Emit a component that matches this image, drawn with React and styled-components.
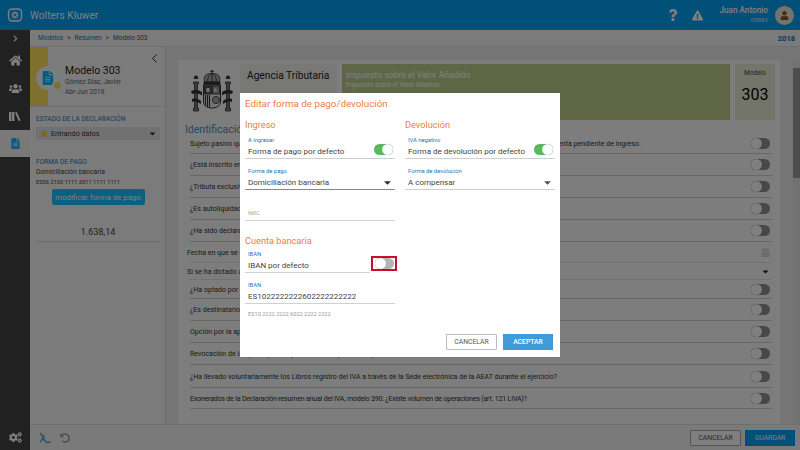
import React from 'react'
import styled, {createGlobalStyle} from 'styled-components'
import {ChevronLeft} from 'lucide-react'
import {
  FaHome,
  FaUsers,
  FaQuestion,
  FaExclamationTriangle,
  FaCogs,
  FaUser,
  FaFileAlt,
  FaUndoAlt,
  FaCalendarAlt,
  FaCaretDown,
  FaChevronRight
} from 'react-icons/fa'

const GlobalStyle = createGlobalStyle`
  html, body {
    margin: 0;
    padding: 0;
    background: #f4f4f4;
    overflow: hidden;
  }
  * {
    box-sizing: border-box;
  }
`

const rows = [
  {height: 20, text: 'Sujeto pasivo que tributa exclusivamente en territorio foral y con resultado a ingresar en el ejercicio y mantiene una cuenta pendiente de ingreso.'},
  {height: 21.5, text: '¿Está inscrito en el Registro de devolución mensual (art. 30 RIVA)?'},
  {height: 22.5, text: '¿Tributa exclusivamente en régimen simplificado?'},
  {height: 22, text: '¿Es autoliquidación conjunta de grupo de entidades?'},
  {height: 22, text: '¿Ha sido declarado en concurso de acreedores en este período?'},
  {height: 21, text: 'Fecha en que se dictó el auto de declaración de concurso', kind: 'date', plain: true},
  {height: 17, text: 'Si se ha dictado auto de declaración de concurso en este período', kind: 'select', plain: true},
  {height: 19, text: '¿Ha optado por el régimen especial del criterio de caja?'},
  {height: 22, text: '¿Es destinatario de operaciones a las que se aplique el criterio de caja?'},
  {height: 22, text: 'Opción por la aplicación de la prorrata especial'},
  {height: 22, text: 'Revocación de la opción por la aplicación de la prorrata especial'},
  {height: 23, text: '¿Ha llevado voluntariamente los Libros registro del IVA a través de la Sede electrónica de la AEAT durante el ejercicio?'},
  {height: 21, tight: true, text: 'Exonerados de la Declaración-resumen anual del IVA, modelo 390: ¿Existe volumen de operaciones (art. 121 LIVA)?'}
]

const Logo = () => (
  <svg width="16" height="16" viewBox="0 0 16 16" fill="none">
    <rect x="1.5" y="2" width="13" height="12" rx="3.5" stroke="#fff" strokeWidth="1.4" />
    <circle cx="8" cy="8" r="3.4" fill="#cfe6f5" />
    <path d="M6.6 6.6l2.8 2.8M9.4 6.6l-2.8 2.8" stroke="#00a4fe" strokeWidth="1" />
  </svg>
)

const LibraryIcon = () => (
  <svg width="12" height="10" viewBox="0 0 12 10" fill="#fff">
    <rect x="0" y="1" width="2.4" height="9" />
    <rect x="3" y="1" width="2.4" height="9" />
    <path d="M6 1.6L7.8 1l3.8 8.4-2 .6z" />
  </svg>
)

const TaxIcon = () => (
  <svg width="14" height="12" viewBox="0 0 14 12" fill="none" stroke="#58a8d8" strokeWidth="1.6">
    <path d="M2.5 1l5 8.5" />
    <path d="M7.5 9.5c1.2 1.2 3.4 1.2 5 0" />
    <path d="M6.5 3.5L2.5 10" />
  </svg>
)

const Crest = () => (
  <svg width="44" height="46" viewBox="0 0 44 46" fill="none" stroke="#333" strokeWidth="0.8">
    <path d="M22 1v4M20.4 2.4h3.2" strokeWidth="1.1" />
    <path d="M14.5 13c-2-8 4-8.500 7.500-8.500s9.500.5 7.500 8.500z" fill="#aaa" />
    <path d="M18 13c-1-4 1-7 4-8.500 3 1.500 5 4.500 4 8.500M22 4.500V13" />
    <rect x="14" y="13" width="16" height="2.4" fill="#333" />
    <path d="M13.500 16h17v17c0 8-17 8-17 0z" fill="#e8e8e8" strokeWidth="1" />
    <rect x="14.500" y="17" width="7" height="8" fill="#555" />
    <rect x="22.500" y="17" width="7" height="8" fill="#999" />
    <path d="M16.500 19h3v4h-3zM24.500 19l3 2-3 2z" fill="#e8e8e8" stroke="none" />
    <path d="M15.500 26v10M17.500 26v12M19.500 26v12" strokeWidth="1.1" />
    <circle cx="26" cy="31" r="3.600" fill="#aaa" />
    <path d="M3.500 13h5v2h-1v24h1v3h-5v-3h1V15h-1zM35.500 13h5v2h-1v24h1v3h-5v-3h1V15h-1z" fill="#777" />
    <path d="M4 9.500h4l-1-2.500H5zM36 9.500h4l-1-2.500h-2z" fill="#333" />
    <path d="M1 22c4-2 8-1 11 1v3.500c-3-2-7-3-10-1.500zM43 22c-4-2-8-1-11 1v3.500c3-2 7-3 10-1.500z" fill="#333" stroke="none" />
    <path d="M2 30c3-1 7 0 9 2v3c-3-2-6-3-9-2zM42 30c-3-1-7 0-9 2v3c3-2 6-3 9-2z" fill="#333" stroke="none" />
  </svg>
)

const App = () => (
  <Page>
    <GlobalStyle />
    <Header>
      <Brand>
        <Logo />
        <BrandName>Wolters Kluwer</BrandName>
      </Brand>
      <HeaderTools>
        <HeaderIcon><FaQuestion size={12} /></HeaderIcon>
        <HeaderIcon><FaExclamationTriangle size={11} /></HeaderIcon>
        <UserBlock>
          <UserName>Juan Antonio</UserName>
          <UserCompany>0388V</UserCompany>
        </UserBlock>
        <Avatar><FaUser size={9} /></Avatar>
      </HeaderTools>
    </Header>

    <Body>
      <Rail>
        <RailItem $small><FaChevronRight size={7} /></RailItem>
        <RailItem><FaHome size={13} /></RailItem>
        <RailItem><FaUsers size={13} /></RailItem>
        <RailItem><LibraryIcon /></RailItem>
        <RailItem $active><FaFileAlt size={11} /></RailItem>
        <RailBottom><FaCogs size={13} /></RailBottom>
      </Rail>

      <Workspace>
        <Breadcrumb>
          <Crumbs>
            <Crumb>Modelos</Crumb><Sep>&gt;</Sep>
            <Crumb>Resumen</Crumb><Sep>&gt;</Sep>
            <CrumbCurrent>Modelo 303</CrumbCurrent>
          </Crumbs>
          <Year>2018</Year>
        </Breadcrumb>

        <Content>
          <SidePanel>
            <SideHead>
              <GoldStripe />
              <ModelBadge>
                <FaFileAlt size={14} color="#12b4ff" />
                <BadgeDot />
              </ModelBadge>
              <SideTitle>
                <ModelName>Modelo 303</ModelName>
                <ModelMeta>Gómez Díaz, Javier</ModelMeta>
                <ModelMeta>Abr-Jun 2018</ModelMeta>
              </SideTitle>
              <Collapse><ChevronLeft size={15} strokeWidth={1.6} /></Collapse>
            </SideHead>

            <SideSection>
              <SideLabel>ESTADO DE LA DECLARACIÓN</SideLabel>
              <StateSelect>
                <StateDot />
                <StateText>Entrando datos</StateText>
                <FaCaretDown size={9} color="#333" />
              </StateSelect>
            </SideSection>

            <PaySection>
              <SideLabel>FORMA DE PAGO</SideLabel>
              <PayText>Domiciliación bancaria</PayText>
              <PayText $small>ES56 2100 1111 3011 1111 1111</PayText>
              <PayButton>modificar forma de pago</PayButton>
              <Amount>1.638,14</Amount>
            </PaySection>
          </SidePanel>

          <MainColumn>
            <Card>
              <Banner>
                <CrestBox><Crest /></CrestBox>
                <AgencyBox>Agencia Tributaria</AgencyBox>
                <TaxBox>
                  <TaxTitle>Impuesto sobre el Valor Añadido</TaxTitle>
                  <TaxSub>Impuesto sobre el Valor Añadido</TaxSub>
                </TaxBox>
                <ModelBox>
                  <ModelBoxLabel>Modelo</ModelBoxLabel>
                  <ModelBoxNumber>303</ModelBoxNumber>
                </ModelBox>
              </Banner>

              <SectionTitle>Identificación</SectionTitle>
              <RowList>
                {rows.map(row => (
                  <Row key={row.text} $height={row.height} $plain={row.plain}>
                    <RowText $plain={row.plain} $tight={row.tight}>{row.text}</RowText>
                    {row.kind === 'date' && <FaCalendarAlt size={9} color="#d0d0d0" />}
                    {row.kind === 'select' && <FaCaretDown size={9} color="#222" />}
                    {!row.kind && <Toggle $tone="page" />}
                  </Row>
                ))}
              </RowList>
            </Card>
            <Scrollbar>
              <ScrollThumb />
            </Scrollbar>
          </MainColumn>
        </Content>

        <Footer>
          <FooterIcons>
            <TaxIcon />
            <FaUndoAlt size={10} color="#a0a0a0" />
          </FooterIcons>
          <FooterButtons>
            <GhostButton $page>CANCELAR</GhostButton>
            <SaveButton>GUARDAR</SaveButton>
          </FooterButtons>
        </Footer>
      </Workspace>
    </Body>

    <Overlay>
      <Modal>
        <ModalTitle>Editar forma de pago/devolución</ModalTitle>
        <ModalColumns>
          <ModalColumn>
            <GroupTitle>Ingreso</GroupTitle>
            <Field $gap={6}>
              <FieldLabel>A ingresar</FieldLabel>
              <FieldValue>
                <span>Forma de pago por defecto</span>
                <Toggle $on $lift />
              </FieldValue>
            </Field>
            <Field>
              <FieldLabel>Forma de pago</FieldLabel>
              <FieldValue $strong>
                <span>Domiciliación bancaria</span>
                <FaCaretDown size={11} color="#333" />
              </FieldValue>
            </Field>
            <Field $gap={15.5}>
              <FieldValue $muted>
                <span>NRC</span>
              </FieldValue>
            </Field>
            <GroupTitle $second>Cuenta bancaria</GroupTitle>
            <Field $gap={4.5}>
              <FieldLabel>IBAN</FieldLabel>
              <FieldValue $short>
                <span>IBAN por defecto</span>
                <Highlight><Toggle /></Highlight>
              </FieldValue>
            </Field>
            <Field>
              <FieldLabel>IBAN</FieldLabel>
              <FieldValue>
                <span>ES1022222222602222222222</span>
              </FieldValue>
            </Field>
            <Hint>ES10 2222 2222 6022 2222 2222</Hint>
          </ModalColumn>

          <ModalColumn>
            <GroupTitle>Devolución</GroupTitle>
            <Field $gap={6}>
              <FieldLabel>IVA negativo</FieldLabel>
              <FieldValue>
                <span>Forma de devolución por defecto</span>
                <Toggle $on $lift />
              </FieldValue>
            </Field>
            <Field>
              <FieldLabel>Forma de devolución</FieldLabel>
              <FieldValue>
                <span>A compensar</span>
                <FaCaretDown size={11} color="#555" />
              </FieldValue>
            </Field>
          </ModalColumn>
        </ModalColumns>
        <ModalActions>
          <GhostButton>CANCELAR</GhostButton>
          <AcceptButton>ACEPTAR</AcceptButton>
        </ModalActions>
      </Modal>
    </Overlay>
  </Page>
)

export default App

const Page = styled.div`
  position: relative;
  display: flex;
  flex-direction: column;
  width: 800px;
  height: 450px;
  overflow: hidden;
  font-family: Roboto, "Noto Sans", "Liberation Sans", sans-serif;
  color: #333;
`

const Header = styled.header`
  display: flex;
  align-items: center;
  justify-content: space-between;
  flex: 0 0 30px;
  padding: 0 6px 0 7px;
  background: #00a0f4;
  color: #fff;
`

const Brand = styled.div`
  display: flex;
  align-items: center;
  gap: 7px;
`

const BrandName = styled.span`
  font-size: 10px;
  letter-spacing: 0.1px;
`

const HeaderTools = styled.div`
  display: flex;
  align-items: center;
`

const HeaderIcon = styled.span`
  display: flex;
  width: 25px;
  justify-content: center;
`

const UserBlock = styled.div`
  display: flex;
  flex-direction: column;
  align-items: flex-end;
  width: 50px;
  margin: 0 7px 0 8px;
  line-height: 9px;
  white-space: nowrap;
`

const UserName = styled.span`
  font-size: 8.2px;
  font-weight: 500;
`

const UserCompany = styled.span`
  font-size: 6px;
  opacity: 0.8;
`

const Avatar = styled.span`
  display: flex;
  align-items: center;
  justify-content: center;
  width: 19px;
  height: 19px;
  border-radius: 50%;
  background: #f0e4d8;
  color: #7a5a3a;
`

const Body = styled.div`
  display: flex;
  flex: 1;
  min-height: 0;
`

const Rail = styled.nav`
  display: flex;
  flex-direction: column;
  flex: 0 0 30px;
  background: #424242;
  color: #fff;
`

const RailItem = styled.div`
  display: flex;
  align-items: center;
  justify-content: center;
  height: ${props => (props.$small ? '17px' : '27.5px')};
  background: ${props => (props.$active ? '#f2f2f2' : 'transparent')};
  color: ${props => (props.$active ? '#12b4ff' : '#fff')};
`

const RailBottom = styled.div`
  display: flex;
  align-items: center;
  justify-content: center;
  height: 26px;
  margin-top: auto;
`

const Workspace = styled.div`
  display: flex;
  flex-direction: column;
  flex: 1;
  min-width: 0;
`

const Breadcrumb = styled.div`
  display: flex;
  align-items: center;
  justify-content: space-between;
  flex: 0 0 17px;
  padding: 0 5px 0 8px;
  background: #f6f6f6;
  border-bottom: 1px solid #e0e0e0;
  font-size: 6.5px;
`

const Crumbs = styled.div`
  display: flex;
  gap: 4px;
`

const Crumb = styled.span`
  color: #1a78b8;
`

const Sep = styled.span`
  color: #555;
`

const CrumbCurrent = styled.span`
  color: #555;
`

const Year = styled.span`
  color: #0a6cad;
  font-size: 7.5px;
  font-weight: 700;
`

const Content = styled.div`
  display: flex;
  flex: 1;
  min-height: 0;
  background: #ebebeb;
`

const SidePanel = styled.aside`
  display: flex;
  flex-direction: column;
  flex: 0 0 136px;
  background: #f6f6f6;
  border-right: 1px solid #dcdcdc;
`

const SideHead = styled.div`
  position: relative;
  display: flex;
  align-items: center;
  height: 60px;
  border-bottom: 1px solid #dcdcdc;
`

const GoldStripe = styled.div`
  align-self: stretch;
  flex: 0 0 18px;
  background: #ffe060;
`

const ModelBadge = styled.div`
  position: relative;
  display: flex;
  align-items: center;
  justify-content: center;
  flex: 0 0 24px;
  height: 24px;
  margin: 2px 0 0 -12px;
  border-radius: 50%;
  background: #f4fafc;
`

const BadgeDot = styled.span`
  position: absolute;
  right: -3px;
  bottom: -1px;
  width: 11px;
  height: 11px;
  border-radius: 50%;
  border: 2px solid #f4fafc;
  background: #ffe060;
`

const SideTitle = styled.div`
  display: flex;
  flex-direction: column;
  margin: 8px 0 0 5px;
`

const ModelName = styled.span`
  font-size: 10.5px;
  line-height: 14px;
  color: #222;
`

const ModelMeta = styled.span`
  font-size: 6.6px;
  line-height: 9.5px;
  color: #666;
`

const Collapse = styled.span`
  position: absolute;
  top: 4px;
  right: 3px;
  display: flex;
  color: #222;
`

const SideSection = styled.section`
  height: 42px;
  padding: 7px 5px 0 6px;
`

const SideLabel = styled.div`
  font-size: 6.6px;
  line-height: 10px;
  color: #1a78b8;
`

const StateSelect = styled.div`
  display: flex;
  align-items: center;
  height: 13px;
  margin-top: 3px;
  padding: 0 3px 0 5px;
  background: #e2e2e2;
  font-size: 7.2px;
`

const StateDot = styled.span`
  width: 6px;
  height: 6px;
  margin-right: 4px;
  border-radius: 50%;
  background: #f2d34e;
`

const StateText = styled.span`
  flex: 1;
  color: #333;
`

const PaySection = styled.section`
  display: flex;
  flex-direction: column;
  padding: 8px 5px 0 6px;
`

const PayText = styled.div`
  margin-top: 1px;
  font-size: ${props => (props.$small ? '5.7px' : '6.8px')};
  line-height: 9px;
  color: #444;
`

const PayButton = styled.button`
  align-self: center;
  width: 93px;
  height: 16px;
  margin-top: 2px;
  padding: 0;
  border: 0;
  border-radius: 2px;
  background: #12c0ff;
  color: #fff;
  font-family: inherit;
  font-size: 7.8px;
`

const Amount = styled.div`
  margin-top: 22px;
  padding-bottom: 4px;
  border-bottom: 1px solid #dcdcdc;
  text-align: center;
  font-size: 9px;
  color: #444;
`

const MainColumn = styled.main`
  display: flex;
  flex: 1;
  min-width: 0;
  padding: 13px 0 0 12px;
`

const Card = styled.div`
  flex: 0 0 602px;
  padding: 4px 5px 0 12px;
  background: #fafafa;
`

const Banner = styled.div`
  display: flex;
  gap: 5px;
  height: 56px;
`

const CrestBox = styled.div`
  display: flex;
  align-items: center;
  flex: 0 0 45px;
`

const AgencyBox = styled.div`
  flex: 0 0 97px;
  padding: 5px 0 0 7px;
  background: #f0f0ec;
  font-size: 10.2px;
  line-height: 14px;
  color: #222;
`

const TaxBox = styled.div`
  display: flex;
  flex-direction: column;
  flex: 1;
  padding: 5px 4px;
  background: #bccd8c;
  color: #fff;
`

const TaxTitle = styled.span`
  font-size: 8.6px;
  line-height: 12px;
`

const TaxSub = styled.span`
  font-size: 6.5px;
  line-height: 9px;
`

const ModelBox = styled.div`
  display: flex;
  flex-direction: column;
  align-items: center;
  flex: 0 0 40px;
  padding-top: 5px;
  background: #e6ebd4;
`

const ModelBoxLabel = styled.span`
  font-size: 6.5px;
  color: #444;
`

const ModelBoxNumber = styled.span`
  margin-top: 8px;
  font-size: 16px;
  line-height: 20px;
  color: #000;
`

const SectionTitle = styled.h2`
  margin: 4px 0 0 -5px;
  font-size: 10.5px;
  font-weight: 400;
  line-height: 12px;
  color: #4a90c0;
`

const RowList = styled.div`
  display: flex;
  flex-direction: column;
  margin: -2px 3px 0 0;
`

const Row = styled.div`
  display: flex;
  align-items: center;
  justify-content: space-between;
  height: ${props => props.$height}px;
  padding-right: 2px;
  border-bottom: ${props => (props.$plain ? '1px solid #e4e4e4' : '1px solid #cfcfcf')};
`

const RowText = styled.span`
  margin-left: ${props => (props.$plain ? '-3px' : '0')};
  font-size: 7.05px;
  letter-spacing: ${props => (props.$tight ? '-0.2px' : '0')};
  white-space: nowrap;
  color: #333;
`

const Scrollbar = styled.div`
  flex: 0 0 7px;
  margin: 0 0 0 13px;
  padding-top: 8px;
  background: #e4e4e4;
`

const ScrollThumb = styled.div`
  height: 110px;
  background: #9a9a9a;
`

const Footer = styled.footer`
  display: flex;
  align-items: center;
  justify-content: space-between;
  flex: 0 0 26px;
  padding: 0 5px 0 8px;
  background: #f4f4f4;
  border-top: 1px solid #dedede;
`

const FooterIcons = styled.div`
  display: flex;
  align-items: center;
  gap: 8px;
`

const FooterButtons = styled.div`
  display: flex;
  gap: 4px;
`

const GhostButton = styled.button`
  width: 51px;
  height: 16px;
  padding: 0;
  border: 1px solid ${props => (props.$page ? '#aaa' : '#bbb')};
  border-radius: 1px;
  background: #fff;
  color: #555;
  font-family: inherit;
  font-size: 6.8px;
`

const SaveButton = styled.button`
  width: 50px;
  height: 16px;
  padding: 0;
  border: 0;
  background: #00a0f4;
  color: #fff;
  font-family: inherit;
  font-size: 6.8px;
`

const Overlay = styled.div`
  position: absolute;
  inset: 0;
  display: flex;
  align-items: center;
  justify-content: center;
  background: rgba(0, 0, 0, 0.5);
`

const Modal = styled.div`
  display: flex;
  flex-direction: column;
  width: 320px;
  height: 264px;
  padding: 5px 5px 7px 5px;
  background: #fff;
`

const ModalTitle = styled.h1`
  margin: 0;
  font-size: 9.8px;
  font-weight: 400;
  line-height: 12px;
  color: #e9803f;
`

const ModalColumns = styled.div`
  display: flex;
  flex: 1;
  gap: 10px;
  margin-top: 9px;
`

const ModalColumn = styled.div`
  display: flex;
  flex: 0 0 150px;
  flex-direction: column;
`

const GroupTitle = styled.h2`
  margin: ${props => (props.$second ? '14px 0 0' : '0')};
  font-size: 9.2px;
  font-weight: 400;
  line-height: 12px;
  color: #e9803f;
`

const Field = styled.div`
  margin-top: ${props => props.$gap ?? 9}px;
`

const FieldLabel = styled.div`
  padding-left: 3px;
  font-size: 5.8px;
  line-height: 7px;
  color: #1a78b8;
`

const FieldValue = styled.div`
  display: flex;
  align-items: center;
  justify-content: space-between;
  height: 15px;
  padding: 0 2px 0 3px;
  border-bottom: 1px solid ${props => (props.$strong ? '#888' : '#d0d0d0')};
  font-size: ${props => (props.$muted ? '6px' : '8px')};
  color: ${props => (props.$muted ? '#aaa' : '#444')};
  ${props => props.$short && 'border-image: linear-gradient(to right, #d0d0d0 83%, transparent 83%) 1;'}
`

const Toggle = styled.span`
  position: relative;
  display: block;
  flex: 0 0 19px;
  height: 11px;
  margin-top: ${props => (props.$lift ? '-3px' : '0')};
  border-radius: 5.5px;
  background: ${props => (props.$on ? '#5cb85c' : '#b4b4b4')};
  ${props => props.$tone === 'page' && 'background: #909090;'}
  &::after {
    content: '';
    position: absolute;
    top: 0;
    left: ${props => (props.$on ? '8px' : '0')};
    width: 11px;
    height: 11px;
    border-radius: 50%;
    background: #fff;
    box-shadow: 0 0 1px rgba(0, 0, 0, 0.4);
  }
`

const Highlight = styled.span`
  display: flex;
  align-items: center;
  justify-content: center;
  flex: 0 0 26px;
  height: 15px;
  margin: -3px -4px 0 0;
  border: 2px solid #c8102e;
`

const Hint = styled.div`
  margin-top: 6px;
  padding-left: 3px;
  font-size: 5.6px;
  line-height: 8px;
  color: #999;
`

const ModalActions = styled.div`
  display: flex;
  justify-content: flex-end;
  gap: 6px;
  padding-right: 2px;
`

const AcceptButton = styled.button`
  width: 50px;
  height: 16px;
  padding: 0;
  border: 0;
  background: #3f9bd9;
  color: #fff;
  font-family: inherit;
  font-size: 6.8px;
  font-weight: 500;
`
